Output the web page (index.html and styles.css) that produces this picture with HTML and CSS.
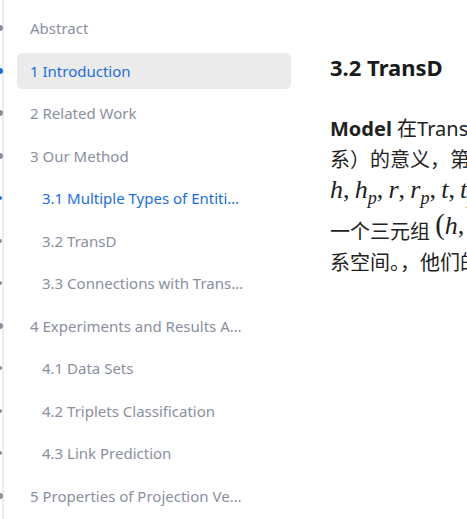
FILE: index.html
```html
<!DOCTYPE html>
<html lang="zh-CN">
<head>
  <meta charset="UTF-8" />
  <meta name="viewport" content="width=device-width, initial-scale=1.0"/>
  <title>TransD</title>
  <link rel="stylesheet" href="styles.css">
</head>
<body>

  <div class="page">
    <nav class="toc">
      <ul class="toc-list">
        <li class="toc-item"><a>Abstract</a></li>
        <li class="toc-item active"><a>1 Introduction</a></li>
        <li class="toc-item"><a>2 Related Work</a></li>
        <li class="toc-item"><a>3 Our Method</a></li>
        <li class="toc-item sub current"><a>3.1 Multiple Types of Entities and Relations</a></li>
        <li class="toc-item sub"><a>3.2 TransD</a></li>
        <li class="toc-item sub"><a>3.3 Connections with TransE, TransH and TransR</a></li>
        <li class="toc-item"><a>4 Experiments and Results Analysis</a></li>
        <li class="toc-item sub"><a>4.1 Data Sets</a></li>
        <li class="toc-item sub"><a>4.2 Triplets Classification</a></li>
        <li class="toc-item sub"><a>4.3 Link Prediction</a></li>
        <li class="toc-item"><a>5 Properties of Projection Vectors</a></li>
      </ul>
    </nav>

    <main class="content">
      <h2>3.2 TransD</h2>
      <p class="para">
        <b>Model</b> 在TransD中，我们用两个向量定义每个命名符号对象（实体和关<br>
        系）的意义，第二个向量用于构建映射矩阵。例如，给定三元组，其向量为<br>
        <span class="math"><i>h</i><span class="p">,</span><i>h</i><sub>p</sub><span class="p">,</span><i>r</i><span class="p">,</span><i>r</i><sub>p</sub><span class="p">,</span><i>t</i><span class="p">,</span><i>t</i><sub>p</sub></span>，其中下标 p 表示投影向量。对于<br>
        一个三元组 <span class="math tall"><span class="paren">(</span><i>h</i><span class="p">,</span><i>r</i><span class="p">,</span><i>t</i><span class="paren">)</span></span>，我们有两个映射矩阵，将实体投影到关<br>
        系空间。，他们的定义如下
      </p>
    </main>
  </div>

</body>
</html>
```

FILE: styles.css
```css
* {
  margin: 0;
  padding: 0;
  box-sizing: border-box;
}

body {
  font-family: 'Noto Sans', 'Noto Sans CJK SC', sans-serif;
  background: #fff;
  color: #1f1f1f;
  overflow: hidden;
  height: 100vh;
}

.page {
  display: flex;
  align-items: flex-start;
}

/* table of contents */
.toc {
  flex: 0 0 300px;
  padding-top: 10px;
  position: relative;
  min-height: 100vh;
}

.toc::before {
  content: "";
  position: absolute;
  left: 2px;
  top: 0;
  bottom: 0;
  width: 2px;
  background: #ececef;
}

.toc-list {
  list-style: none;
  display: flex;
  flex-direction: column;
  gap: 6.5px;
}

.toc-item {
  position: relative;
  height: 36px;
  margin-left: 17px;
  width: 274px;
  border-radius: 5px;
  display: flex;
  align-items: center;
  padding: 0 44px 0 13px;
  font-size: 15px;
  color: #8a8f9e;
}

.toc-item a {
  white-space: nowrap;
  overflow: hidden;
  text-overflow: ellipsis;
}

.toc-item::before {
  content: "";
  position: absolute;
  left: -20px;
  top: 15px;
  width: 6px;
  height: 6px;
  border-radius: 50%;
  background: #8a8f9e;
}

.toc-item.sub {
  padding-left: 25px;
}

.toc-item.sub::before {
  left: -19px;
  top: 16px;
  width: 4px;
  height: 4px;
}

.toc-item.active {
  background: #ebebeb;
  color: #1a6fd8;
}

.toc-item.active::before,
.toc-item.current::before {
  background: #1a6fd8;
}

.toc-item.current {
  color: #1a6fd8;
}

/* article */
.content {
  padding: 52px 0 0 30px;
  flex: 0 0 auto;
}

.content h2 {
  font-size: 22px;
  line-height: 31px;
  font-weight: 700;
  color: #1a1a1a;
  margin-bottom: 30px;
}

.para {
  font-size: 20px;
  line-height: 31px;
  color: #222;
  white-space: nowrap;
}

.para b {
  font-weight: 700;
}

.math {
  font-family: 'Liberation Serif', 'DejaVu Serif', serif;
  font-size: 1.3em;
  line-height: 1;
}

.math .p {
  margin-right: 0.2em;
}

.math sub {
  font-size: 0.7em;
  font-style: italic;
  line-height: 0;
}

.math.tall {
  display: inline-block;
  line-height: 38px;
  vertical-align: 5px;
}

.math .paren {
  font-size: 1.1em;
}
```
